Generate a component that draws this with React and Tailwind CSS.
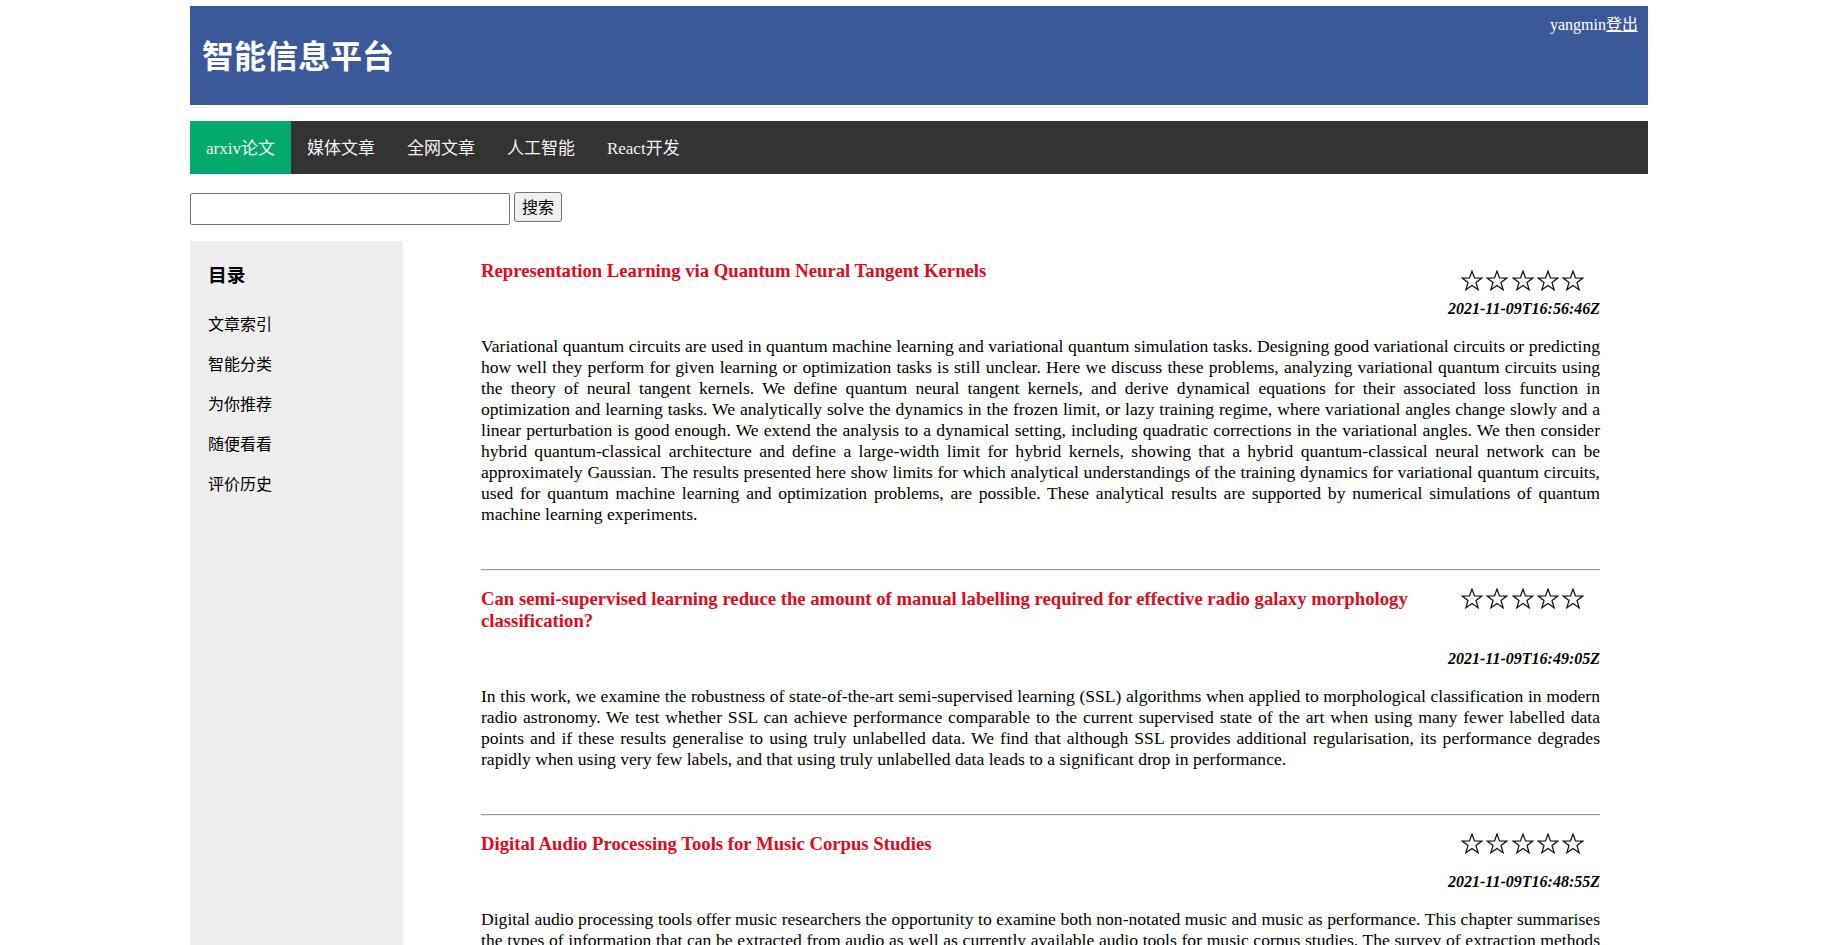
import React from 'react';

const tabs = ['arxiv论文', '媒体文章', '全网文章', '人工智能', 'React开发'];
const menu = ['文章索引', '智能分类', '为你推荐', '随便看看', '评价历史'];

const articles = [
    {
        title: 'Representation Learning via Quantum Neural Tangent Kernels',
        date: '2021-11-09T16:56:46Z',
        body: 'Variational quantum circuits are used in quantum machine learning and variational quantum simulation tasks. Designing good variational circuits or predicting how well they perform for given learning or optimization tasks is still unclear. Here we discuss these problems, analyzing variational quantum circuits using the theory of neural tangent kernels. We define quantum neural tangent kernels, and derive dynamical equations for their associated loss function in optimization and learning tasks. We analytically solve the dynamics in the frozen limit, or lazy training regime, where variational angles change slowly and a linear perturbation is good enough. We extend the analysis to a dynamical setting, including quadratic corrections in the variational angles. We then consider hybrid quantum-classical architecture and define a large-width limit for hybrid kernels, showing that a hybrid quantum-classical neural network can be approximately Gaussian. The results presented here show limits for which analytical understandings of the training dynamics for variational quantum circuits, used for quantum machine learning and optimization problems, are possible. These analytical results are supported by numerical simulations of quantum machine learning experiments.',
    },
    {
        title: 'Can semi-supervised learning reduce the amount of manual labelling required for effective radio galaxy morphology classification?',
        date: '2021-11-09T16:49:05Z',
        body: 'In this work, we examine the robustness of state-of-the-art semi-supervised learning (SSL) algorithms when applied to morphological classification in modern radio astronomy. We test whether SSL can achieve performance comparable to the current supervised state of the art when using many fewer labelled data points and if these results generalise to using truly unlabelled data. We find that although SSL provides additional regularisation, its performance degrades rapidly when using very few labels, and that using truly unlabelled data leads to a significant drop in performance.',
    },
    {
        title: 'Digital Audio Processing Tools for Music Corpus Studies',
        date: '2021-11-09T16:48:55Z',
        body: 'Digital audio processing tools offer music researchers the opportunity to examine both non-notated music and music as performance. This chapter summarises the types of information that can be extracted from audio as well as currently available audio tools for music corpus studies. The survey of extraction methods includes both a primer on signal processing and background theory on audio feature extraction. The chapter is written to provide a starting point for researchers interested in working with audio in corpus studies, along with an overview of the tools and methods that are currently available.',
    },
];

// outline star, same shape as the ☆ glyph
function Star() {
    return (
        <svg width="22" height="21" viewBox="0 0 24 23" fill="none" stroke="#111" strokeWidth="1.4" strokeLinejoin="miter">
            <polygon points="12,1.2 14.7,8.7 22.8,8.9 16.4,13.8 18.7,21.6 12,17 5.3,21.6 7.6,13.8 1.2,8.9 9.3,8.7" />
        </svg>
    );
}

function Stars() {
    return (
        <div className="flex h-[21px] gap-[3.2px]">
            {[0, 1, 2, 3, 4].map((i) => (
                <Star key={i} />
            ))}
        </div>
    );
}

function Article({ item, first }) {
    return (
        <div>
            {/* divider between articles */}
            {!first && <div className="mt-[44px] h-[2px] border-t border-t-[#9a9a9a] bg-[#eeeeee]" />}

            <div className={first ? 'flex items-start gap-[20px] pt-[19px]' : 'flex items-start gap-[20px] pt-[17px]'}>
                <h3 className="flex-1 pb-[18.7px] text-[18.7px] font-bold leading-[21.5px] text-[#e00b1c]">
                    {item.title}
                </h3>
                <div className={first ? 'mt-[10px] mr-[16px]' : 'mr-[16px]'}>
                    <Stars />
                </div>
            </div>

            <p className="text-right text-[16px] font-bold italic leading-[18.4px]">{item.date}</p>
            <p className="mt-[17.6px] text-justify text-[17.6px] leading-[21px]">{item.body}</p>
        </div>
    );
}

export default function App() {
    return (
        <div className="min-h-screen bg-white font-['Liberation_Serif','Noto_Sans_CJK_SC',serif] text-black">
            <div className="mx-auto w-[1458px] pt-[6px]">
                {/* Header */}
                <header className="flex h-[99px] items-start justify-between bg-[#3b5998] text-white">
                    <h1 className="self-center pl-[12px] pt-[3px] text-[32px] font-bold leading-[40px]">智能信息平台</h1>
                    <div className="pt-[7px] pr-[10px] text-[16px] leading-[24px]">
                        yangmin<a href="#" className="underline">登出</a>
                    </div>
                </header>

                {/* Top nav */}
                <nav className="mt-[16px] flex h-[53px] bg-[#333333]">
                    {tabs.map((t, i) => (
                        <a
                            key={t}
                            href="#"
                            className={
                                i === 0
                                    ? 'flex items-center bg-[#04aa6d] px-[16px] pt-[3px] text-[17px] text-[#f2f2f2]'
                                    : 'flex items-center px-[16px] pt-[3px] text-[17px] text-[#f2f2f2]'
                            }
                        >
                            {t}
                        </a>
                    ))}
                </nav>

                {/* Search */}
                <div className="mt-[18px] flex items-start gap-[4px]">
                    <input
                        type="text"
                        className="mt-[1px] h-[32px] w-[320px] rounded-[2px] border border-[#767676] px-[4px] text-[16px]"
                    />
                    <button className="h-[30px] w-[48px] rounded-[3px] border border-[#767676] bg-[#efefef] pt-[2px] text-[16px] leading-[20px]">
                        搜索
                    </button>
                </div>

                {/* Body */}
                <div className="mt-[16px] flex">
                    <aside className="w-[213px] shrink-0 bg-[#eeeeee] pl-[18px] pt-[23px]">
                        <h3 className="text-[18.7px] font-bold leading-[24px]">目录</h3>
                        <ul className="mt-[17px]">
                            {menu.map((m) => (
                                <li key={m} className="text-[16px] leading-[40px]">
                                    <a href="#">{m}</a>
                                </li>
                            ))}
                        </ul>
                    </aside>

                    <main className="min-w-0 flex-1 pl-[78px] pr-[48px] pb-[40px]">
                        {articles.map((a, i) => (
                            <Article key={a.date} item={a} first={i === 0} />
                        ))}
                    </main>
                </div>
            </div>
        </div>
    );
}
